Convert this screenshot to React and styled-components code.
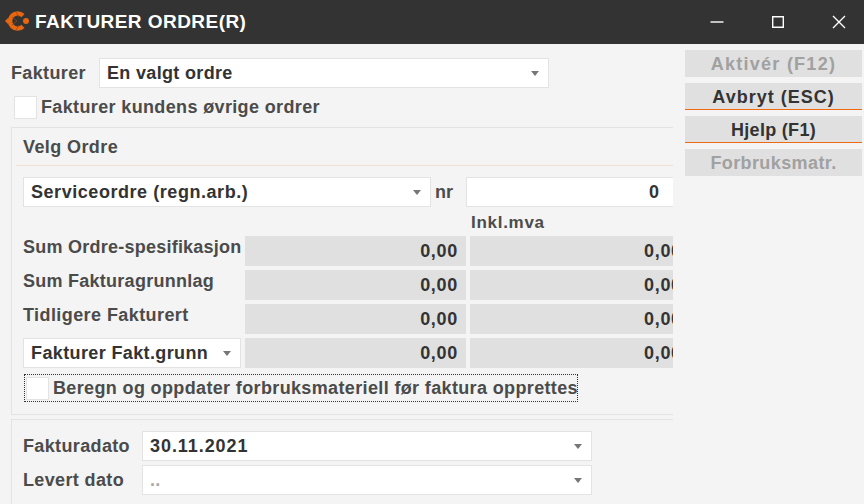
import React from "react";
import styled, { createGlobalStyle } from "styled-components";

const Global = createGlobalStyle`
  html, body { margin: 0; padding: 0; background: #f4f4f4; }
  body { width: 864px; height: 504px; overflow: hidden; font-family: "Liberation Sans", Arial, sans-serif; }
`;
const Window = styled.div`width:864px;height:504px;display:flex;flex-direction:column;overflow:hidden;background:#f4f4f4;`;
const TitleBar = styled.header`height:44px;flex:none;background:#333;color:#fff;display:flex;align-items:center;padding-right:13px;box-sizing:border-box;`;
const Logo = styled.svg`width:26px;height:24px;margin:0 0 2px 4px;flex:none;`;
const Title = styled.h1`margin:0 0 0 5px;flex:1;font-size:19px;font-weight:700;letter-spacing:.45px;`;
const WinControls = styled.div`display:flex;gap:37px;`;
const WinBtn = styled.button`width:24px;height:24px;border:0;background:none;padding:0;display:flex;align-items:center;justify-content:center;`;
const WinIcon = styled.svg`width:14px;height:14px;fill:none;stroke:#fff;stroke-width:1.4;`;
const Body = styled.div`flex:1;display:flex;min-height:0;`;
const Main = styled.main`width:673px;flex:none;overflow:hidden;padding:14px 0 0 11px;box-sizing:border-box;`;
const Side = styled.aside`width:177px;margin-left:12px;padding-top:6px;display:flex;flex-direction:column;gap:6px;`;
const SideBtn = styled.button`
  height:27px;box-sizing:border-box;border:0;padding:2px 0 0;background:#e0e0e0;font:700 18px "Liberation Sans",sans-serif;letter-spacing:${p=>p.$track}px;
  color:${p=>p.$off?"#a1a1a1":"#333"};border-bottom:${p=>p.$accent?"1px solid #ed6a12":"0"};
`;
const Row = styled.div`display:flex;align-items:center;`;
const Label = styled.span`font-size:18px;font-weight:700;color:#4b4b4b;letter-spacing:.36px;white-space:nowrap;width:${p=>p.$w?p.$w+"px":"auto"};flex:none;`;
const Select = styled.div`
  width:${p=>p.$w}px;height:30px;box-sizing:border-box;flex:none;background:#fff;border:1px solid #e3e3e3;display:flex;align-items:center;justify-content:space-between;
  padding:0 9px 0 7px;font-size:18px;font-weight:700;letter-spacing:${p=>p.$track||.33}px;color:${p=>p.$muted?"#a8a8a8":"#333"};white-space:nowrap;
`;
const Caret = styled.i`width:0;height:0;border:4.5px solid transparent;border-top:5px solid #777;border-bottom:0;flex:none;`;
const Check = styled.span`width:23px;height:23px;box-sizing:border-box;flex:none;background:#fff;border:1px solid #e3e3e3;display:block;`;
const TopCheck = styled(Row)`margin:8px 0 0 3px;gap:4px;`;
const Group = styled.section`width:680px;height:288px;box-sizing:border-box;margin-top:8px;border:1px solid #e3e3e3;border-right:0;padding:0 0 0 11px;`;
const GroupTitle = styled.div`height:38px;margin-left:-7px;padding:2px 0 0 7px;border-bottom:1px solid #f0dfd2;display:flex;align-items:center;font-size:18px;font-weight:700;color:#4b4b4b;letter-spacing:.4px;box-sizing:border-box;`;
const NrRow = styled(Row)`margin-top:11px;`;
const Nr = styled.span`width:31px;padding-left:4px;font-size:18px;font-weight:700;color:#4b4b4b;flex:none;`;
const NrInput = styled.div`width:207px;height:30px;box-sizing:border-box;flex:none;background:#fff;border:1px solid #e3e3e3;border-right:0;display:flex;align-items:center;justify-content:flex-end;padding-right:14px;font-size:18px;font-weight:700;color:#333;`;
const Header = styled.div`height:29px;padding:8px 0 0 448px;box-sizing:border-box;font-size:17px;font-weight:700;color:#4b4b4b;letter-spacing:.72px;line-height:16px;`;
const Grid = styled.div`display:grid;grid-template-columns:218px 221px 220px;gap:4px;width:667px;align-items:start;`;
const RowLabel = styled.div`height:30px;font-size:18px;font-weight:700;color:#4b4b4b;letter-spacing:${p=>p.$track}px;white-space:nowrap;line-height:23px;`;
const Amount = styled.div`height:30px;background:#e0e0e0;font-size:18px;font-weight:700;color:#333;letter-spacing:.7px;line-height:31px;text-align:right;padding-right:8px;overflow:hidden;white-space:nowrap;box-sizing:border-box;`;
const AmountClipped = styled(Amount)`padding-right:0;text-align:left;padding-left:174px;`;
const Focus = styled(Row)`width:554px;height:28px;box-sizing:border-box;margin:6px 0 0 1px;border:1px dotted #333;gap:4px;padding-left:1px;`;
const DateGroup = styled.section`width:680px;height:90px;box-sizing:border-box;margin-top:4px;border:1px solid #e3e3e3;border-right:0;padding:11px 0 0 11px;display:flex;flex-direction:column;gap:4px;`;

const amounts=[["Sum Ordre-spesifikasjon",.24],["Sum Fakturagrunnlag",.26],["Tidligere Fakturert",.42]];
export default function App(){return <Window><Global/>
<TitleBar>
<Logo viewBox="0 0 26 24"><path d="M1 12l3-3 3 3-3 3z" fill="#e8660f"/><path d="M19 6.6A7.6 7.6 0 1 0 19 17.4" fill="none" stroke="#e8660f" strokeWidth="4.4"/><circle cx="22" cy="12" r="3" fill="#e8660f"/><path d="M8 8l5 4-5 4M12 3l3 5M12 21l3-5" fill="none" stroke="#8a4a1c" strokeWidth=".7"/></Logo>
<Title>FAKTURER ORDRE(R)</Title>
<WinControls>
<WinBtn aria-label="Minimer"><WinIcon viewBox="0 0 14 14"><path d="M.5 7h13"/></WinIcon></WinBtn>
<WinBtn aria-label="Maksimer"><WinIcon viewBox="0 0 14 14"><path d="M1.7 1.7h10.6v10.6H1.7z"/></WinIcon></WinBtn>
<WinBtn aria-label="Lukk"><WinIcon viewBox="0 0 14 14"><path d="M1 1l12 12M13 1L1 13"/></WinIcon></WinBtn>
</WinControls>
</TitleBar>
<Body><Main>
<Row><Label $w={88}>Fakturer</Label><Select $w={450}>En valgt ordre<Caret/></Select></Row>
<TopCheck><Check/><Label>Fakturer kundens øvrige ordrer</Label></TopCheck>
<Group><GroupTitle>Velg Ordre</GroupTitle>
<NrRow><Select $w={408} $track={.55}>Serviceordre (regn.arb.)<Caret/></Select><Nr>nr</Nr><NrInput>0</NrInput></NrRow>
<Header>Inkl.mva</Header>
<Grid>{amounts.map(([a,t])=><React.Fragment key={a}><RowLabel $track={t}>{a}</RowLabel><Amount>0,00</Amount><AmountClipped>0,00</AmountClipped></React.Fragment>)}
<Select $w={218} $track={.38}>Fakturer Fakt.grunn<Caret/></Select><Amount>0,00</Amount><AmountClipped>0,00</AmountClipped></Grid>
<Focus><Check/><Label>Beregn og oppdater forbruksmateriell før faktura opprettes</Label></Focus>
</Group>
<DateGroup><Row><Label $w={119}>Fakturadato</Label><Select $w={450} $track={.93}>30.11.2021<Caret/></Select></Row><Row><Label $w={119}>Levert dato</Label><Select $w={450} $muted>..<Caret/></Select></Row></DateGroup>
</Main><Side><SideBtn $off $track={1.25}>Aktivér (F12)</SideBtn><SideBtn $accent $track={1}>Avbryt (ESC)</SideBtn><SideBtn $accent $track={.3}>Hjelp (F1)</SideBtn><SideBtn $off $track={.4}>Forbruksmatr.</SideBtn></Side></Body></Window>}
